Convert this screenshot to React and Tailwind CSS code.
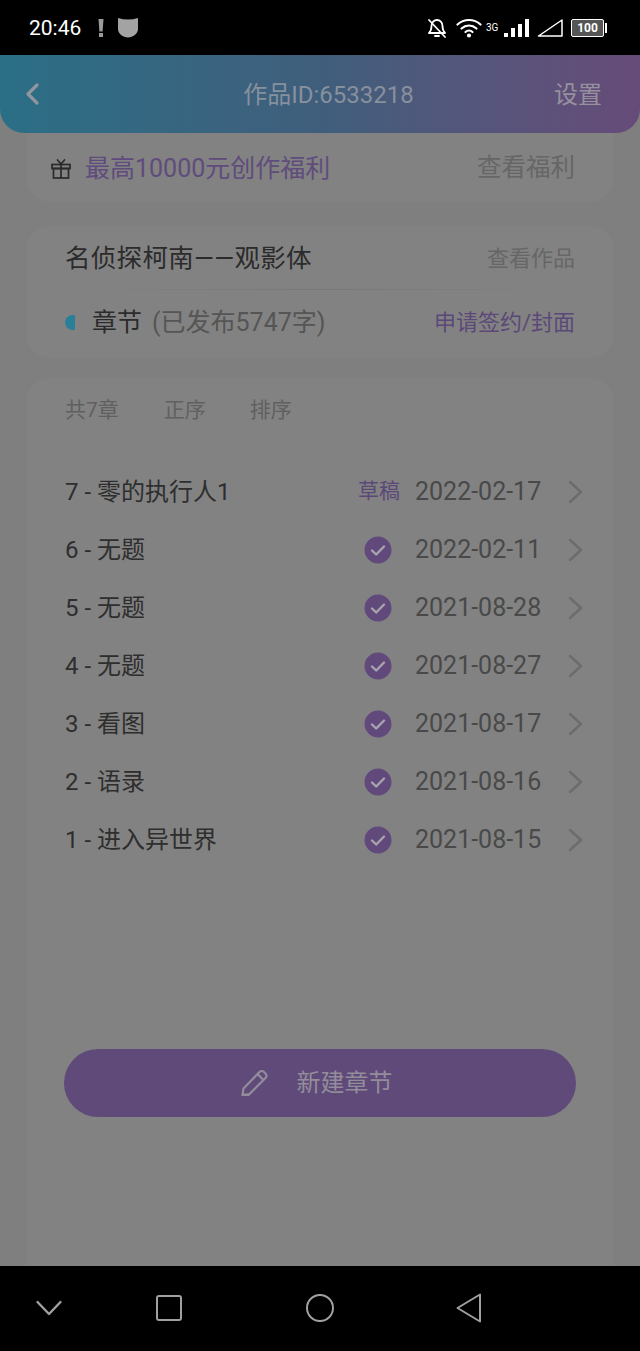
import React from "react";

const rows = [
  ["7 - 零的执行人1", "2022-02-17", true],
  ["6 - 无题", "2022-02-11"],
  ["5 - 无题", "2021-08-28"],
  ["4 - 无题", "2021-08-27"],
  ["3 - 看图", "2021-08-17"],
  ["2 - 语录", "2021-08-16"],
  ["1 - 进入异世界", "2021-08-15"],
];

function Row({ title, date, draft }) {
  return (
    <div className="flex h-[58px] items-center">
      <span className="flex-1 text-[24px] text-[#2e2e2e]">{title}</span>
      {draft ? (
        <span className="text-[21px] text-[#5c4878]">草稿</span>
      ) : (
        <svg width="28" height="28" viewBox="0 0 28 28" className="mr-[8px]">
          <circle cx="14" cy="14" r="13.5" fill="#614a7b" />
          <path d="M8 14.5l4.2 4L20 10.5" fill="none" stroke="#a8a3ae" strokeWidth="2.4" strokeLinecap="round" strokeLinejoin="round" />
        </svg>
      )}
      <span className="ml-[15px] w-[127px] whitespace-nowrap text-[25px] text-[#494949]">{date}</span>
      <svg width="16" height="24" viewBox="0 0 16 24" className="ml-[26px]">
        <path d="M2 2l11 10L2 22" fill="none" stroke="#6c6c6c" strokeWidth="2.4" strokeLinecap="round" strokeLinejoin="round" />
      </svg>
    </div>
  );
}

export default function App() {
  return (
    <div
      className="flex h-[1351px] w-[640px] flex-col overflow-hidden bg-[#7f7f7f]"
      style={{ fontFamily: 'Roboto, "Noto Sans CJK SC", sans-serif' }}
    >
      {/* status bar */}
      <div className="flex h-[55px] shrink-0 items-center bg-black pl-[29px] pr-[33px]">
        <span className="mt-[2px] text-[21px] text-white">20:46</span>
        <svg width="6" height="18" viewBox="0 0 6 18" className="ml-[17px]">
          <path d="M.5 0h5L4.600 12.500H1.400z" fill="#9a9a9a" />
          <rect x="1" y="14" width="4" height="4" fill="#9a9a9a" />
        </svg>
        <svg width="22" height="21" viewBox="0 0 22 21" className="ml-[13px]">
          <path d="M1 1Q11 4 21 1v11c0 5-5 8-10 8.500C6 20 1 17 1 12z" fill="#a3a3a3" />
        </svg>
        <div className="ml-auto flex items-center">
          <svg width="20" height="22" viewBox="0 0 20 22" fill="none" stroke="#fff" strokeWidth="1.8" strokeLinecap="round" strokeLinejoin="round">
            <path d="M2 16c2-2 2.500-3 2.500-7 0-3.500 2.500-6 5.500-6s5.500 2.500 5.500 6c0 4 .5 5 2.500 7z" />
            <path d="M8 19h4" />
            <path d="M2 3l16 17" />
          </svg>
          <svg width="26" height="20" viewBox="0 0 26 20" fill="none" stroke="#fff" strokeWidth="2.200" strokeLinecap="round" className="ml-[9px]">
            <path d="M1.500 6.500c6.500-6 16.500-6 23 0" />
            <path d="M5.500 10.500c4.500-4 10.500-4 15 0" />
            <path d="M9.500 14c2-1.800 5-1.800 7 0" />
            <circle cx="13" cy="17.500" r="1" fill="#fff" />
          </svg>
          <span className="ml-[4px] w-[13px] text-[10px] text-white">3G</span>
          <div className="ml-[5px] flex items-end gap-[3px]">
            <span className="h-[4px] w-[4px] bg-white" />
            <span className="h-[9px] w-[4px] bg-white" />
            <span className="h-[13px] w-[4px] bg-white" />
            <span className="h-[18px] w-[4px] bg-white" />
          </div>
          <svg width="26" height="18" viewBox="0 0 26 18" fill="none" stroke="#fff" strokeWidth="1.500" className="ml-[8px]">
            <path d="M1.500 17L25 1v16z" strokeLinejoin="round" />
          </svg>
          <div className="ml-[8px] flex items-center">
            <div className="flex h-[18px] w-[33px] items-center justify-center rounded-[2px] border border-white bg-[#555] text-[12px] font-bold leading-none text-white">
              100
            </div>
            <span className="ml-[1px] h-[10px] w-[2px] bg-white" />
          </div>
        </div>
      </div>

      {/* header */}
      <div className="relative z-10 flex h-[78px] shrink-0 items-center rounded-b-[24px] bg-gradient-to-r from-[#2a6f86] via-[#3f5e7c] to-[#664b79] pl-[24px] pr-[38px]">
        <svg width="16" height="24" viewBox="0 0 16 24">
          <path d="M13 3L4 12l9 9" fill="none" stroke="#8f969e" strokeWidth="3.200" strokeLinecap="round" strokeLinejoin="round" />
        </svg>
        <span className="mt-[2px] flex-1 pl-[63px] text-center text-[24px] text-[#87909d]">作品ID:6533218</span>
        <span className="mt-[2px] text-[24px] text-[#96919e]">设置</span>
      </div>

      <div className="flex flex-1 flex-col px-[26px]">
        {/* benefit */}
        <div className="-mt-[20px] flex h-[89px] shrink-0 items-center rounded-b-[24px] bg-[#828282] pl-[25px] pr-[39px] pt-[22px]">
          <svg width="20" height="22" viewBox="0 0 20 22" fill="none" stroke="#2a2a2a" strokeWidth="1.700">
            <rect x="1" y="6.500" width="18" height="4" />
            <rect x="2.500" y="10.500" width="15" height="9.500" />
            <path d="M10 6.500V20" />
            <path d="M10 6L6.500 2M10 6l3.500-4" strokeLinecap="round" />
          </svg>
          <span className="ml-[14px] flex-1 text-[25px] text-[#5f4c7c]">最高10000元创作福利</span>
          <span className="text-[24.500px] text-[#666666]">查看福利</span>
        </div>

        {/* work card */}
        <div className="mt-[24px] h-[132px] shrink-0 rounded-[24px] bg-[#828282] pl-[39px] pr-[39px]">
          <div className="flex h-[63px] items-center justify-between pt-[2px]">
            <span className="text-[25.500px] tracking-[0.3px] text-[#2b2b2b]">名侦探柯南——观影体</span>
            <span className="text-[22px] text-[#666666]">查看作品</span>
          </div>
          <div className="h-px bg-gradient-to-r from-transparent via-[#787878] to-transparent" />
          <div className="flex h-[64px] items-center pt-[1px]">
            <span className="h-[15px] w-[10px] rounded-l-full bg-[#2a7f98]" />
            <span className="ml-[17px] text-[25px] text-[#2b2b2b]">章节</span>
            <span className="ml-[10px] flex-1 text-[25px] text-[#555]">(已发布5747字)</span>
            <span className="text-[22px] text-[#5c4878]">申请签约/封面</span>
          </div>
        </div>

        {/* chapter card */}
        <div className="mt-[20px] flex flex-1 flex-col rounded-t-[24px] bg-[#828282] px-[39px]">
          <div className="flex h-[65px] shrink-0 items-center gap-[44px] pt-[1px] text-[21px] text-[#606060]">
            <span className="mr-[1px]">共7章</span>
            <span>正序</span>
            <span>排序</span>
          </div>
          <div className="mr-[-9px] mt-[20px]">
            {rows.map((r) => (
              <Row key={r[0]} title={r[0]} date={r[1]} draft={r[2]} />
            ))}
          </div>
          <div className="mx-[-1px] mt-[180px] flex h-[68px] shrink-0 items-center justify-center rounded-full bg-[#604a79] pr-[8px]">
            <svg width="30" height="28" viewBox="0 0 30 28" fill="none" stroke="#938d9b" strokeWidth="2.200" strokeLinejoin="round">
              <path d="M2.500 26l1-6.500L19.500 3a3 3 0 0 1 4.500 0l1.500 1.500a3 3 0 0 1 0 4.500L9.500 25z" />
              <path d="M2.500 26h7M17.500 5l6 6" />
            </svg>
            <span className="ml-[27px] text-[24px] text-[#938d9b]">新建章节</span>
          </div>
        </div>
      </div>

      {/* nav bar */}
      <div className="flex h-[85px] shrink-0 items-center bg-black pl-[35px] pb-[1px]">
        <svg width="28" height="20" viewBox="0 0 28 20" fill="none" stroke="#a0a0a0" strokeWidth="2.400" strokeLinecap="round" strokeLinejoin="round">
          <path d="M2.500 4l11.500 12L25.500 4" />
        </svg>
        <div className="ml-[93px] h-[26px] w-[26px] rounded-[3px] border-2 border-[#a0a0a0]" />
        <div className="ml-[124px] h-[28px] w-[28px] rounded-full border-2 border-[#a0a0a0]" />
        <svg width="28" height="34" viewBox="0 0 28 34" fill="none" stroke="#a0a0a0" strokeWidth="2" strokeLinejoin="round" className="ml-[121px]">
          <path d="M25 3.500v27L2.500 17z" />
        </svg>
      </div>
    </div>
  );
}
